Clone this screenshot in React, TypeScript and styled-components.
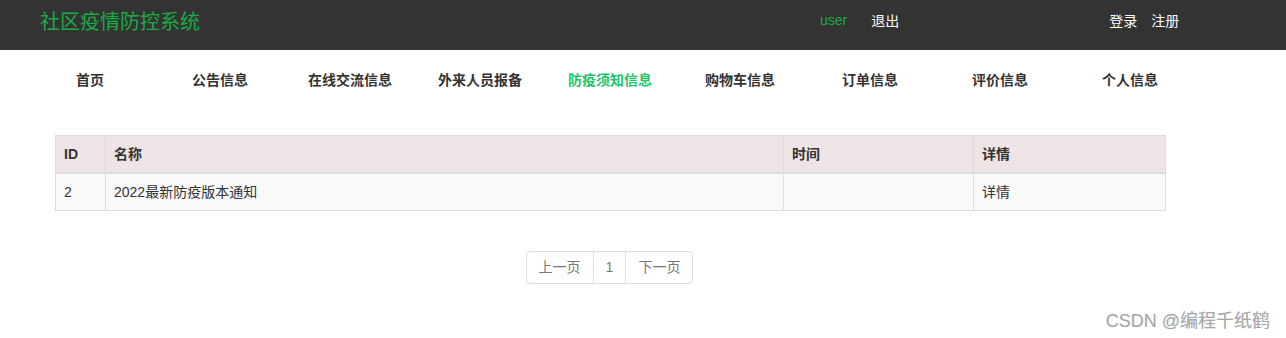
import React from 'react';
import styled, { createGlobalStyle } from 'styled-components';

const GlobalStyle = createGlobalStyle`
    body{
        margin:0;
        background:#fff;
        font-family:"Liberation Sans","Noto Sans CJK SC",sans-serif;
        font-size:14px;
        color:#333;
    }
`;

const Page = styled.div`
    width:1286px;
    height:338px;
    position:relative;
    overflow:hidden;
`;

const Header = styled.div`
    height:50px;
    background:#333333;
    display:flex;
    align-items:center;
    padding:0 0 0 40px;
    box-sizing:border-box;
`;

const Title = styled.div`
    font-size:20px;
    color:#1aab45;
    margin-top:-10px;
    width:780px;
`;

const HeadLink = styled.a<{ $green?: boolean; $gap?: number }>`
    font-size:14px;
    color:${p => p.$green ? '#1aab45' : '#fff'};
    margin-right:${p => p.$gap ?? 0}px;
    margin-top:-10px;
    text-decoration:none;
`;

const Nav = styled.ul`
    list-style:none;
    margin:0;
    padding:0 0 2px 25px;
    height:60px;
    box-sizing:border-box;
    display:flex;
    align-items:center;
`;

const NavItem = styled.li<{ $active?: boolean }>`
    width:130px;
    text-align:center;
    font-size:14px;
    font-weight:bold;
    color:${p => p.$active ? '#1fc46a' : '#333'};
`;

const Content = styled.div`
    padding:25px 0 0 55px;
`;

const Table = styled.table`
    width:1111px;
    border-collapse:collapse;
    border:1px solid #ddd;
    font-size:14px;
    th, td{
        border:1px solid #ddd;
        padding:8px;
        line-height:20px;
        text-align:left;
    }
    th{
        background:#efe4e5;
        border-bottom:2px solid #ddd;
        font-weight:bold;
    }
    td{
        background:#f9f9f9;
    }
`;

const Pager = styled.div`
    display:flex;
    justify-content:center;
    margin-top:40px;
    padding-right:67px;
`;

const PageBtn = styled.span<{ $first?: boolean; $last?: boolean }>`
    padding:6px 12px;
    line-height:19px;
    color:#777;
    border:1px solid #ddd;
    margin-left:${p => p.$first ? 0 : -1}px;
    border-radius:${p => p.$first ? '4px 0 0 4px' : p.$last ? '0 4px 4px 0' : '0'};
`;

const Watermark = styled.div`
    position:absolute;
    right:16px;
    bottom:6px;
    font-size:18px;
    color:#a8a8a8;
    text-shadow:0 0 1px #ddd;
`;

const navs = ['首页', '公告信息', '在线交流信息', '外来人员报备', '防疫须知信息', '购物车信息', '订单信息', '评价信息', '个人信息'];

function App() {
    return (
        <Page>
            <GlobalStyle />
            <Header>
                <Title>社区疫情防控系统</Title>
                <HeadLink $green $gap={24}>user</HeadLink>
                <HeadLink $gap={210}>退出</HeadLink>
                <HeadLink $gap={14}>登录</HeadLink>
                <HeadLink>注册</HeadLink>
            </Header>
            <Nav>
                {navs.map(n => <NavItem key={n} $active={n === '防疫须知信息'}>{n}</NavItem>)}
            </Nav>
            <Content>
                <Table>
                    <thead>
                        <tr>
                            <th style={{ width: 33 }}>ID</th>
                            <th>名称</th>
                            <th style={{ width: 173 }}>时间</th>
                            <th style={{ width: 175 }}>详情</th>
                        </tr>
                    </thead>
                    <tbody>
                        <tr>
                            <td>2</td>
                            <td>2022最新防疫版本通知</td>
                            <td></td>
                            <td>详情</td>
                        </tr>
                    </tbody>
                </Table>
            </Content>
            <Pager>
                <PageBtn $first>上一页</PageBtn>
                <PageBtn>1</PageBtn>
                <PageBtn $last>下一页</PageBtn>
            </Pager>
            <Watermark>CSDN @编程千纸鹤</Watermark>
        </Page>
    );
}

export default App;
